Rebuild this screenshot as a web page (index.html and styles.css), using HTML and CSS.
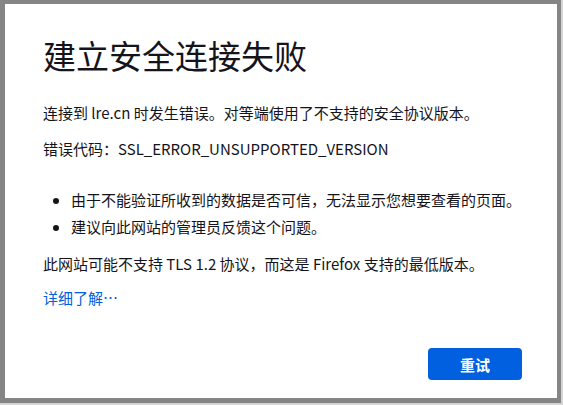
FILE: index.html
```html
<!DOCTYPE html>
<html lang="zh-CN">
<head>
  <meta charset="UTF-8" />
  <title>建立安全连接失败</title>
  <link rel="stylesheet" href="styles.css">
</head>
<body>

  <div class="frame">
    <div class="error-page">
      <h1>建立安全连接失败</h1>
      <p class="lead">连接到 lre.cn 时发生错误。对等端使用了不支持的安全协议版本。</p>
      <p class="code">错误代码：SSL_ERROR_UNSUPPORTED_VERSION</p>

      <ul class="notes">
        <li>由于不能验证所收到的数据是否可信，无法显示您想要查看的页面。</li>
        <li>建议向此网站的管理员反馈这个问题。</li>
      </ul>

      <p class="hint">此网站可能不支持 TLS 1.2 协议，而这是 Firefox 支持的最低版本。</p>
      <a class="more" href="#">详细了解…</a>

      <div class="actions">
        <button class="retry">重试</button>
      </div>
    </div>
  </div>

</body>
</html>
```

FILE: styles.css
```css
html {
  background: #d4d4d4;
}

body {
  margin: 0;
  padding: 0;
  font-family: "Noto Sans CJK SC", "Noto Sans", sans-serif;
  color: #15141a;
}

.frame {
  width: 552px;
  height: 394px;
  border: 4px solid #858585;
  border-left-width: 5px;
  border-bottom-width: 5px;
  background: #fff;
}

.error-page {
  padding: 31px 0 0 38px;
  display: flex;
  flex-direction: column;
}

h1 {
  margin: 0;
  font-size: 33px;
  font-weight: normal;
  line-height: 40px;
}

p {
  margin: 0;
  font-size: 15px;
  line-height: 22px;
}

.lead {
  margin-top: 27px;
}

.code {
  margin-top: 14px;
}

.notes {
  margin: 29px 0 0;
  padding-left: 28px;
  font-size: 15px;
  line-height: 22px;
  white-space: nowrap;
}

.notes li + li {
  margin-top: 5px;
}

.hint {
  margin-top: 15px;
}

.more {
  margin-top: 12px;
  font-size: 15px;
  line-height: 22px;
  color: #0060df;
  text-decoration: none;
  align-self: flex-start;
}

.actions {
  margin-top: 39px;
  padding-right: 35px;
  display: flex;
  justify-content: flex-end;
}

.retry {
  width: 94px;
  height: 32px;
  border: none;
  border-radius: 4px;
  background: #0060df;
  color: #fff;
  font-family: inherit;
  font-size: 15px;
  font-weight: bold;
  cursor: pointer;
}
```
